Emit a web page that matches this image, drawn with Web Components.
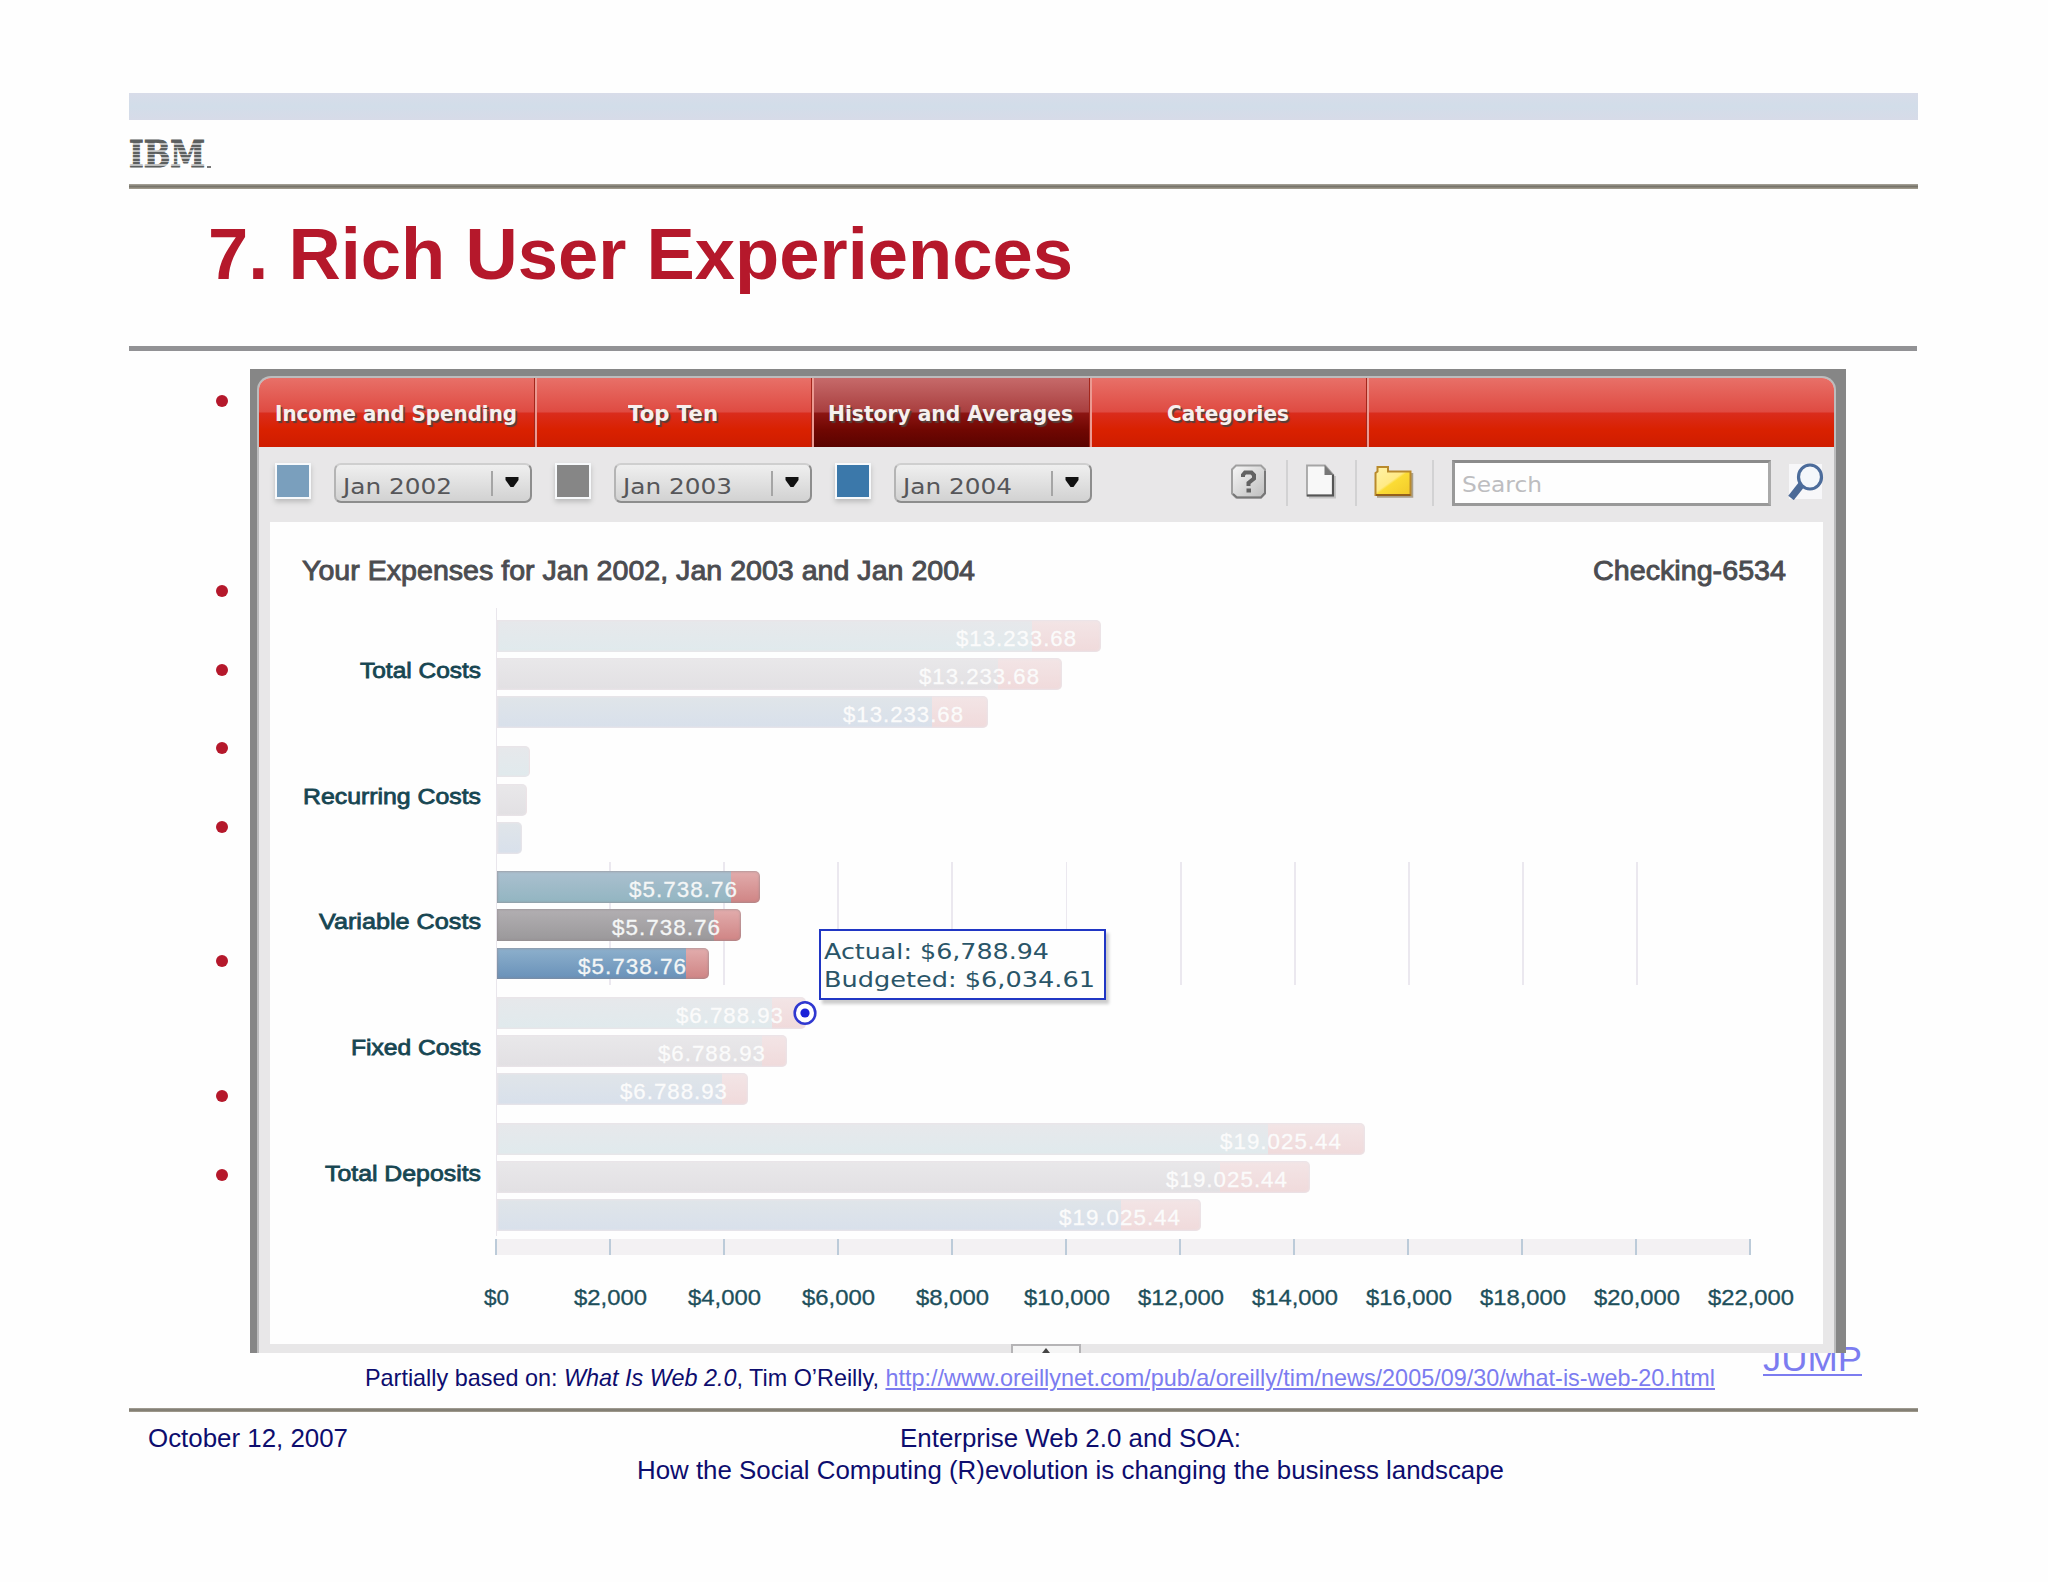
<!DOCTYPE html>
<html lang="en">
<head>
<meta charset="utf-8">
<title>7. Rich User Experiences</title>
<style>
    html, body { margin: 0; background: #fefefe; }
    body { font-family: "Liberation Sans", Arial, sans-serif; }
</style>
</head>
<body>
<slide-page>
    <span slot="title">7. Rich User Experiences</span>
    <expense-panel slot="figure"></expense-panel>
</slide-page>

<script>
/**
 * Text squeezed or stretched to an exact width.
 * - width: target width in px
 */
class FitText extends HTMLElement {
    constructor() {
        super();
        this.attachShadow({ mode: 'open' });
    }

    connectedCallback() {
        const width = Number(this.getAttribute('width'));
        this.shadowRoot.innerHTML = `
            <style>
                :host { display: block; flex: none; width: ${width}px; white-space: nowrap; }
                span { display: inline-block; transform-origin: 0 50%; }
            </style>
            <span><slot></slot></span>
        `;
        const span = this.shadowRoot.querySelector('span');
        const natural = span.getBoundingClientRect().width;
        if (natural) {
            span.style.transform = `scaleX(${width / natural})`;
        }
    }
}

/**
 * Tab of the red bar. Attribute: active
 */
class NavTab extends HTMLElement {
    constructor() {
        super();
        this.attachShadow({ mode: 'open' });
        this.shadowRoot.innerHTML = `
            <style>
                :host {
                    display: flex; align-items: center; justify-content: center;
                    box-sizing: border-box; width: 277.5px; height: 100%; flex: none;
                    padding: 4px 2px 0 0;
                    border-right: 2px solid #eb9a92;
                    box-shadow: inset -1px 0 0 #a3271c;
                    color: #f6f0ee;
                    font: bold 22px/30px "DejaVu Sans", Verdana, sans-serif;
                    text-shadow: 2px 2px 1px #54403c;
                }
                :host([active]) {
                    background: linear-gradient(#c66a6a 0, #a93f3f 49%, #8c1512 51%, #700702 75%, #5a0300 100%);
                }
            </style>
            <slot></slot>
        `;
    }
}

/**
 * Colour swatch with its month dropdown. Attribute: color
 */
class MonthPicker extends HTMLElement {
    constructor() {
        super();
        this.attachShadow({ mode: 'open' });
    }

    connectedCallback() {
        this.shadowRoot.innerHTML = `
            <style>
                :host { display: flex; width: 280px; flex: none; }
                .swatch {
                    box-sizing: border-box; width: 36px; height: 36px; margin-right: 23px;
                    background: ${this.getAttribute('color')};
                    border: 2.5px solid #f7f9fb;
                    box-shadow: 0 3px 5px #bbb;
                }
                .select {
                    box-sizing: border-box; display: flex; width: 198px; height: 40px;
                    padding-left: 7px;
                    border: 2px solid #8d8d8d; border-top-color: #cfcfcf; border-left-color: #b4b4b4;
                    border-radius: 7px;
                    background: linear-gradient(#efefef, #d2d2d2);
                    color: #565659;
                    font: 21.5px/43px "DejaVu Sans", Verdana, sans-serif;
                }
                .sep { width: 2px; height: 25px; margin: 6px 12px 0 39px; background: #a5a5a5; }
                svg { margin-top: 12px; }
            </style>
            <div class="swatch"></div>
            <div class="select">
                <fit-text width="109"><slot></slot></fit-text>
                <div class="sep"></div>
                <svg width="14" height="12"><path d="M0.500 0h13v3L8.500 10H5.500L0.500 3z" fill="#111"/></svg>
            </div>
        `;
    }
}

/**
 * One horizontal bar: coloured part, red part and value.
 * - width, split: total width and start of the red part (px)
 * - series: a, b or c
 * - inset, textwidth: placement of the value
 */
class CostBar extends HTMLElement {
    constructor() {
        super();
        this.attachShadow({ mode: 'open' });
    }

    connectedCallback() {
        const width = this.getAttribute('width');
        const split = this.getAttribute('split');
        const value = this.getAttribute('value');
        const series = this.getAttribute('series');
        this.shadowRoot.innerHTML = `
            <style>
                :host {
                    display: flex; justify-content: flex-end; box-sizing: border-box;
                    width: ${width}px; height: 31.8px;
                    padding-right: ${this.getAttribute('inset')}px;
                    border-radius: 0 5px 5px 0;
                    background:
                        linear-gradient(var(--${series}1), var(--${series}2)) 0 0 / ${split}px 100% no-repeat,
                        linear-gradient(var(--r1), var(--r2));
                    box-shadow: inset 0 0 2px 1px var(--edge);
                    color: var(--value);
                    font: 22px/38px "Liberation Sans", Arial, sans-serif;
                    letter-spacing: 1px;
                    -webkit-text-stroke: .3px var(--value);
                }
            </style>
            ${value ? `<fit-text width="${this.getAttribute('textwidth')}">${value}</fit-text>` : ''}
        `;
    }
}

const GROUPS = [
    { label: 'Total Costs', labelWidth: 121, value: '$13.233.68', textWidth: 121,
      bars: [[604, 535, 24], [565, 501, 22], [491, 435, 24]] },
    { label: 'Recurring Costs', labelWidth: 178, value: '', textWidth: 0,
      bars: [[33, 32, 0], [30, 29, 0], [25, 25, 0]] },
    { label: 'Variable Costs', labelWidth: 162, value: '$5.738.76', textWidth: 109, active: true,
      bars: [[263, 234, 22], [244, 217, 20], [212, 189, 22]] },
    { label: 'Fixed Costs', labelWidth: 130, value: '$6.788.93', textWidth: 108,
      bars: [[309, 275, 22], [290, 265, 21], [251, 225, 20]] },
    { label: 'Total Deposits', labelWidth: 156, value: '$19.025.44', textWidth: 122,
      bars: [[868, 771, 23], [813, 723, 22], [704, 624, 20]] }
];

class ExpenseChart extends HTMLElement {
    constructor() {
        super();
        this.attachShadow({ mode: 'open' });
    }

    connectedCallback() {
        this.render();
    }

    renderGroup(group) {
        const bars = group.bars.map(([width, split, inset], i) => `
            <cost-bar series="${'abc'[i]}" width="${width}" split="${split}" inset="${inset}"
                value="${group.value}" textwidth="${group.textWidth}"></cost-bar>`).join('');
        return `
            <div class="group ${group.active ? 'active' : ''}">
                <div class="label"><fit-text width="${group.labelWidth}">${group.label}</fit-text></div>
                <div class="bars">${bars}</div>
            </div>`;
    }

    renderScale() {
        let html = '';
        for (let v = 0; v <= 22000; v += 2000) {
            const width = v === 0 ? 25 : v < 10000 ? 73 : 86;
            html += `<div><fit-text width="${width}">$${v.toLocaleString('en-US')}</fit-text></div>`;
        }
        return html;
    }

    render() {
        this.shadowRoot.innerHTML = `
            <style>
                :host {
                    display: block; position: relative; box-sizing: border-box;
                    width: 1553px; height: 822px; background: #fefefe;
                    --a1: #e7e8eb; --a2: #e0eaed;
                    --b1: #e9e8ea; --b2: #e2e0e3;
                    --c1: #e0e5e9; --c2: #d8e0eb;
                    --r1: #f3e5e6; --r2: #f0dadb;
                    --edge: #eae4e8; --value: #fbfbfb;
                }
                header {
                    display: flex; justify-content: space-between; box-sizing: border-box;
                    height: 86px; padding: 32px 37px 0 32px;
                    color: #4b4c50; font-size: 28px; line-height: 34px;
                    -webkit-text-stroke: .9px #4b4c50;
                }
                .group { display: flex; height: 125.7px; }
                .label {
                    display: flex; align-items: center; justify-content: flex-end;
                    width: 211px; margin-right: 15px;
                    color: #174652; font-size: 22px; line-height: 30px;
                    -webkit-text-stroke: .8px #174652;
                }
                .bars {
                    display: flex; flex-direction: column; gap: 6.3px; box-sizing: border-box;
                    width: 1143px; padding-top: 12px;
                    border-left: 1px solid #e9e6ec;
                }
                .active {
                    --a1: #abc0cf; --a2: #92b5c1;
                    --b1: #b2afb2; --b2: #9a989a;
                    --c1: #8db0cc; --c2: #6991b9;
                    --r1: #e2adad; --r2: #cf8484;
                    --edge: #93898d88; --value: #f4f6f6;
                }
                .active .bars {
                    background: repeating-linear-gradient(to right, transparent 0 112.2px, #ebe8ef 112.2px 114.1px) 0 3px no-repeat;
                }
                .ticks {
                    display: flex; width: 1256px; height: 16px; margin: 2.5px 0 0 225px;
                    background: #f3f1f3;
                }
                .ticks i { box-sizing: border-box; flex: 1; border-left: 2px solid #bccbd9; }
                .ticks i:last-child { border-right: 2px solid #bccbd9; }
                .scale {
                    display: flex; margin: 28px 0 0 169px;
                    color: #1d4f5b; font-size: 22px; line-height: 30px;
                    -webkit-text-stroke: .3px #1d4f5b;
                }
                .scale div { display: flex; justify-content: center; flex: none; width: 114.1px; }
                .tooltip {
                    position: absolute; left: 549px; top: 407px;
                    box-sizing: border-box; width: 287px; height: 71px; padding: 7px 0 0 3px;
                    background: #fefefe; border: 2px solid #2036c4;
                    box-shadow: 3px 4px 3px #ccc;
                    color: #2a5568; font: 22px/28px "DejaVu Sans", Verdana, sans-serif;
                }
                .marker { position: absolute; left: 522px; top: 477px; }
            </style>
            <header>
                <fit-text width="673">Your Expenses for Jan 2002, Jan 2003 and Jan 2004</fit-text>
                <fit-text width="193">Checking-6534</fit-text>
            </header>
            ${GROUPS.map(group => this.renderGroup(group)).join('')}
            <div class="ticks">${'<i></i>'.repeat(11)}</div>
            <div class="scale">${this.renderScale()}</div>
            <div class="tooltip">
                <fit-text width="225">Actual: $6,788.94</fit-text>
                <fit-text width="271">Budgeted: $6,034.61</fit-text>
            </div>
            <svg class="marker" width="26" height="28" viewBox="0 0 26 28">
                <ellipse cx="13" cy="14" rx="10.3" ry="10.8" fill="#fff" stroke="#3038d0" stroke-width="2.6"/>
                <circle cx="13" cy="14" r="4.6" fill="#1a22d8"/>
            </svg>
        `;
    }
}

class ExpensePanel extends HTMLElement {
    constructor() {
        super();
        this.attachShadow({ mode: 'open' });
    }

    connectedCallback() {
        this.shadowRoot.innerHTML = `
            <style>
                :host {
                    display: block; box-sizing: border-box; width: 1596px; height: 984px;
                    padding: 7px 10px 0 7px; overflow: hidden; background: #868686;
                }
                .frame {
                    box-sizing: border-box; height: 977px;
                    border: 2px solid #bcbcbd; border-bottom: 0; border-radius: 14px 14px 0 0;
                    background: #e8e7e8; overflow: hidden;
                }
                nav {
                    display: flex; height: 68.5px;
                    background: linear-gradient(#e87068 0, #df4b42 49%, #da2c1c 51%, #d92100 75%, #cf1c00 100%);
                }
                .toolbar { display: flex; align-items: flex-start; height: 59.5px; padding: 16px 0 0 16px; box-sizing: content-box; height: 59.5px; }
                .toolbar { box-sizing: border-box; height: 75.5px; }
                .sep { width: 2px; height: 46px; margin-top: -3px; background: #d2d2d3; }
                .search {
                    box-sizing: border-box; width: 319px; height: 46px; margin: -3px 17px 0 18px;
                    padding-left: 7px; background: #fefefe;
                    border: 3px solid #999; border-top: 3px solid #8b8b8b; border-right-color: #aaa;
                    color: #bdbdc0; font: 22px/43px "DejaVu Sans", Verdana, sans-serif;
                }
                .help { margin: 1px 19px 0 115px; }
                .doc { margin: 1px 19px 0 17px; }
                .folder { margin: 2px 18px 0 17px; }
                expense-chart { margin-left: 11px; }
                .handle {
                    box-sizing: border-box; display: flex; justify-content: center;
                    width: 70px; height: 10px; margin-left: 752px;
                    background: #f5f5f5; border: 2px solid #b5b4b6; border-bottom: 0;
                }
            </style>
            <div class="frame">
                <nav>
                    <nav-tab><fit-text width="242">Income and Spending</fit-text></nav-tab>
                    <nav-tab><fit-text width="90">Top Ten</fit-text></nav-tab>
                    <nav-tab active><fit-text width="245">History and Averages</fit-text></nav-tab>
                    <nav-tab><fit-text width="122">Categories</fit-text></nav-tab>
                </nav>
                <div class="toolbar">
                    <month-picker color="#7a9fbd">Jan 2002</month-picker>
                    <month-picker color="#868686">Jan 2003</month-picker>
                    <month-picker color="#3b78aa">Jan 2004</month-picker>
                    <svg class="help" width="37" height="36" viewBox="0 0 37 36">
                        <defs><linearGradient id="h" x1="0" y1="0" x2="1" y2="1">
                            <stop offset="0" stop-color="#f7f7f7"/><stop offset="1" stop-color="#bdbdbd"/>
                        </linearGradient></defs>
                        <path d="M6 1.5h25l4 4v24l-4 4H6l-4-4v-24z" fill="url(#h)" stroke="#a0a0a0" stroke-width="2"/>
                        <path d="M3 30l4 3.500h24l4-4.500V7" fill="none" stroke="#777" stroke-width="2"/>
                        <path d="M13 13V11l2-2.500h6.500l2.500 2.500v3.500l-5.500 4.500v3" fill="none" stroke="#626262" stroke-width="4"/>
                        <rect x="16.500" y="24.500" width="4.500" height="4" fill="#626262"/>
                    </svg>
                    <div class="sep"></div>
                    <svg class="doc" width="31" height="35" viewBox="0 0 31 35">
                        <path d="M4 33.500h26V12" fill="none" stroke="#c4c4c4" stroke-width="2"/>
                        <path d="M2 1.500h18l8 9v21H2z" fill="#f8f8f8" stroke="#a5a5a5" stroke-width="1.800"/>
                        <path d="M28 10.500v21H2" fill="none" stroke="#555" stroke-width="2.200"/>
                        <path d="M19.500 1v10H28.500z" fill="#777"/>
                    </svg>
                    <div class="sep"></div>
                    <svg class="folder" width="40" height="34" viewBox="0 0 40 34">
                        <defs><linearGradient id="f" x1="0" y1="0" x2="0.900" y2="1">
                            <stop offset="0" stop-color="#fff3a8"/><stop offset=".5" stop-color="#ffea86"/>
                            <stop offset=".56" stop-color="#fbdc35"/><stop offset="1" stop-color="#f3cb2a"/>
                        </linearGradient></defs>
                        <path d="M3 31.500h35V8" fill="none" stroke="#aaa08c" stroke-width="2.500"/>
                        <path d="M1.500 8l2-1.500V2h10.500v4.500H36.500v23.500H1.500z" fill="url(#f)" stroke="#b98a2c" stroke-width="2"/>
                        <path d="M2 30h34.500" stroke="#94601c" stroke-width="2.200"/>
                    </svg>
                    <div class="sep"></div>
                    <div class="search"><fit-text width="80">Search</fit-text></div>
                    <svg width="36" height="37" viewBox="0 0 36 37">
                        <rect x="1" y="1" width="33" height="35" fill="#f7f7f9"/>
                        <path d="M14 21L3 35" stroke="#4c6a97" stroke-width="7"/>
                        <ellipse cx="22" cy="14" rx="11.500" ry="12" fill="#f4f7fb" stroke="#4c6c9b" stroke-width="3.200"/>
                    </svg>
                </div>
                <expense-chart></expense-chart>
                <div class="handle"><svg width="10" height="8"><path d="M5 2l4 5H1z" fill="#444"/></svg></div>
            </div>
        `;
    }
}

class SlidePage extends HTMLElement {
    // Distance from each bullet to the next one
    static BULLET_STEPS = [190, 79, 78, 79, 134, 135, 79, 79];

    constructor() {
        super();
        this.attachShadow({ mode: 'open' });
    }

    connectedCallback() {
        const bullets = SlidePage.BULLET_STEPS.map(step => `<li style="height:${step}px"></li>`).join('');
        this.shadowRoot.innerHTML = `
            <style>
                :host {
                    display: block; box-sizing: border-box; width: 2048px; height: 1582px;
                    padding: 93px 130px 0 129px; overflow: hidden; color: #0d0d6e;
                }
                .band { height: 27px; background: linear-gradient(#d8dce9, #d2dde9 50%, #d7dbe8); }
                .logo {
                    display: flex; box-sizing: border-box; height: 64px; padding-top: 14px;
                    color: #5c5f5f; font: bold 37px/41px "DejaVu Serif", serif;
                    -webkit-text-stroke: 1.2px #5c5f5f;
                }
                .stack { display: grid; }
                .stack > * { grid-area: 1 / 1; }
                /* white slits that cut the letters into eight stripes */
                .slits {
                    z-index: 1; height: 28px; margin-top: 7px;
                    background: repeating-linear-gradient(transparent 0 2.200px, #fefefe99 2.200px 3.500px);
                }
                .mark { width: 4px; height: 2px; margin: 32px 0 0 2px; background: #777; }
                .rule { height: 5px; background: linear-gradient(#aaa69c, #77746a 50%, #a8a294); }
                h1 {
                    display: flex; height: 157px; margin: 0 0 0 79px;
                    color: #b5182b; font-size: 73px; line-height: 130px;
                }
                .thin { height: 5px; background: #929295; width: 1788px; }
                .body { display: flex; height: 1002px; }
                ul { width: 121px; margin: 0; padding: 44px 0 0; box-sizing: border-box; list-style: none; }
                li::before {
                    content: ""; display: block; width: 12px; height: 12px; margin-left: 87px;
                    border-radius: 50%; background: #b5182b;
                }
                ::slotted(expense-panel) { position: relative; z-index: 1; margin-top: 18px; }
                .source {
                    display: flex; justify-content: space-between; height: 55px;
                    padding: 0 56px 0 236px; font-size: 23.400px; line-height: 50px;
                }
                a { color: #7c7cf0; text-decoration: underline; text-decoration-thickness: 1.500px; text-underline-offset: 2px; }
                .jump { font-size: 35.500px; line-height: 40px; margin-top: -14px; }
                .jump a { text-underline-offset: 3px; text-decoration-thickness: 2px; }
                .rule.low { height: 4px; }
                footer { display: flex; padding: 11px 0 0 19px; font-size: 25.400px; line-height: 31.500px; }
                .talk { display: flex; flex-direction: column; align-items: center; margin-left: 289px; }
            </style>
            <div class="band"></div>
            <div class="logo">
                <div class="stack"><fit-text width="76">IBM</fit-text><div class="slits"></div></div>
                <div class="mark"></div>
            </div>
            <div class="rule"></div>
            <h1><fit-text width="865"><slot name="title"></slot></fit-text></h1>
            <div class="thin"></div>
            <div class="body">
                <ul>${bullets}</ul>
                <slot name="figure"></slot>
            </div>
            <div class="source">
                <fit-text width="1350">Partially based on: <i>What Is Web 2.0</i>, Tim O’Reilly, <a>http://www.oreillynet.com/pub/a/oreilly/tim/news/2005/09/30/what-is-web-20.html</a></fit-text>
                <div class="jump"><fit-text width="99"><a>JUMP</a></fit-text></div>
            </div>
            <div class="rule low"></div>
            <footer>
                <fit-text width="200">October 12, 2007</fit-text>
                <div class="talk">
                    <fit-text width="341">Enterprise Web 2.0 and SOA:</fit-text>
                    <fit-text width="867">How the Social Computing (R)evolution is changing the business landscape</fit-text>
                </div>
            </footer>
        `;
    }
}

customElements.define('fit-text', FitText);
customElements.define('nav-tab', NavTab);
customElements.define('month-picker', MonthPicker);
customElements.define('cost-bar', CostBar);
customElements.define('expense-chart', ExpenseChart);
customElements.define('expense-panel', ExpensePanel);
customElements.define('slide-page', SlidePage);
</script>
</body>
</html>
